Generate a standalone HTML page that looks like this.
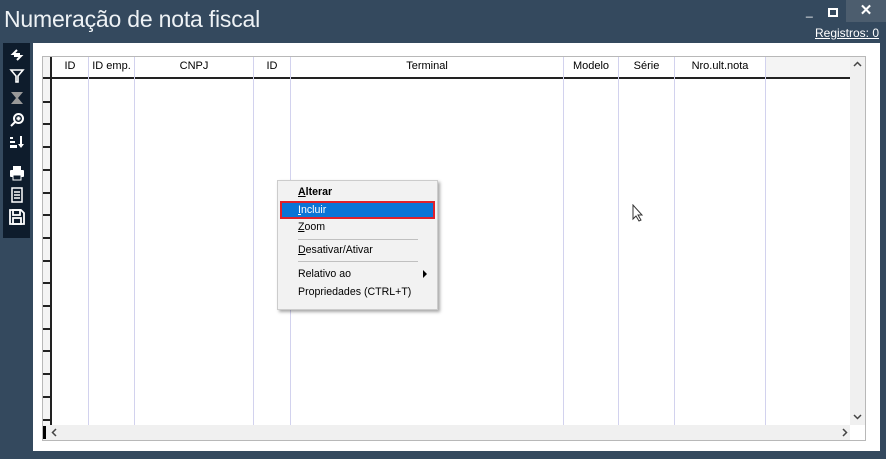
<!DOCTYPE html>
<html><head><meta charset="utf-8"><style>
*{margin:0;padding:0;box-sizing:border-box}
body{width:886px;height:459px;background:#34495e;position:relative;overflow:hidden;font-family:"Liberation Sans",sans-serif}
.abs{position:absolute}
.title{left:4px;top:6px;font-size:23px;color:#eef2f5;letter-spacing:-0.2px}
.panel{left:33px;top:43px;width:847px;height:408px;background:#fff}
.grid{left:42px;top:56px;width:824px;height:385px;border:1px solid #b8b8b8;background:#fff}
.hdr{font-size:11px;color:#000;top:60px;text-align:center}
.vl{width:1px;background:#d2d2ee;top:57px;height:368px}
.menu{left:277px;top:180px;width:161px;height:130px;background:#f2f2f2;border:1px solid #ccc;box-shadow:2px 2px 3px rgba(0,0,0,.35);font-size:10.6px}
.mi{position:absolute;left:20px}
.sep{position:absolute;left:20px;width:120px;height:1px;background:#c0c0c0}
.tb{left:3px;top:43px;width:27px;height:195px;background:#0e1c2c}
.ic{position:absolute;left:6px;width:16px;height:16px}
</style></head><body>
<div class="abs title">Numeração de nota fiscal</div>
<div class="abs" style="left:806px;top:4px;color:#fff;font-size:12px">_</div>
<div class="abs" style="left:828px;top:8px;width:10px;height:9px;border:2px solid #fff;border-top-width:2px"></div>
<div class="abs" style="left:846px;top:0;width:40px;height:22px;background:#4c5d6e;color:#fff;text-align:center;font-size:15px;line-height:22px;font-weight:bold">✕</div>
<div class="abs" style="left:815px;top:26px;color:#fff;font-size:12px;text-decoration:underline">Registros: 0</div>
<div class="abs panel"></div>
<div class="abs grid"></div>
<div class="abs" style="left:43px;top:57px;width:9px;height:368px;background:#f4f4f4;border-right:2px solid #222"></div>
<div class="abs" style="left:766px;top:57px;width:84px;height:21px;background:#f4f4f4"></div>
<div class="abs" style="left:43px;top:77px;width:807px;height:2px;background:#222"></div>
<div id="rows"></div>
<script>
var h='';for(var i=1;i<16;i++){var y=Math.round(78+i*22.7);h+='<div class="abs" style="left:43px;top:'+y+'px;width:9px;height:2px;background:#222"></div>';}
var xs=[88,134,253,290,563,618,674,765];xs.forEach(function(x){h+='<div class="abs vl" style="left:'+x+'px"></div>';});
document.getElementById('rows').innerHTML=h;
</script>
<div class="abs hdr" style="left:52px;width:36px">ID</div>
<div class="abs hdr" style="left:89px;width:45px">ID emp.</div>
<div class="abs hdr" style="left:135px;width:118px">CNPJ</div>
<div class="abs hdr" style="left:254px;width:36px">ID</div>
<div class="abs hdr" style="left:291px;width:272px">Terminal</div>
<div class="abs hdr" style="left:564px;width:54px">Modelo</div>
<div class="abs hdr" style="left:619px;width:55px">Série</div>
<div class="abs hdr" style="left:675px;width:90px">Nro.ult.nota</div>
<div class="abs" style="left:850px;top:57px;width:15px;height:368px;background:#f0f0f0"></div>
<svg class="abs" style="left:853px;top:61px" width="9" height="6" viewBox="0 0 9 6"><path d="M1 5l3.5-3.5L8 5" fill="none" stroke="#444" stroke-width="1.5"/></svg>
<svg class="abs" style="left:853px;top:414px" width="9" height="6" viewBox="0 0 9 6"><path d="M1 1l3.5 3.5L8 1" fill="none" stroke="#444" stroke-width="1.5"/></svg>
<div class="abs" style="left:43px;top:425px;width:807px;height:15px;background:#f0f0f0"></div>
<div class="abs" style="left:43px;top:426px;width:3px;height:13px;background:#000"></div>
<svg class="abs" style="left:51px;top:428px" width="6" height="9" viewBox="0 0 6 9"><path d="M5 1L1.5 4.5 5 8" fill="none" stroke="#444" stroke-width="1.5"/></svg>
<svg class="abs" style="left:842px;top:428px" width="6" height="9" viewBox="0 0 6 9"><path d="M1 1l3.5 3.5L1 8" fill="none" stroke="#444" stroke-width="1.5"/></svg>
<div class="abs tb">
<svg class="ic" style="top:4px" viewBox="0 0 16 16" fill="none" stroke="#fff" stroke-width="2"><path d="M8 3L4 7h7M8 13l4-4H5"/></svg>
<svg class="ic" style="top:25px" viewBox="0 0 16 16" fill="none" stroke="#fff" stroke-width="1.6"><path d="M2 2h12L9 8v6H7V8z"/></svg>
<svg class="ic" style="top:47px" viewBox="0 0 16 16" fill="#999"><path d="M2 2h12L9 8l5 6H2l5-6z"/></svg>
<svg class="ic" style="top:69px" viewBox="0 0 16 16" fill="none" stroke="#fff" stroke-width="2"><circle cx="9.5" cy="6.5" r="4.5"/><path d="M6 10l-4 4M9.5 4.5v4M7.5 6.5h4"/></svg>
<svg class="ic" style="top:91px" viewBox="0 0 16 16" fill="#fff"><rect x="1" y="3" width="3" height="2"/><rect x="1" y="7" width="5" height="2"/><rect x="1" y="11" width="7" height="3"/><path d="M11 2h2v8h2l-3 4-3-4h2z"/></svg>
<svg class="ic" style="top:122px" viewBox="0 0 16 16" fill="#fff"><rect x="4" y="1" width="8" height="4"/><rect x="1" y="5" width="14" height="7" rx="1"/><rect x="4" y="10" width="8" height="5" fill="#0e1c2c" stroke="#fff"/></svg>
<svg class="ic" style="top:144px" viewBox="0 0 16 16" fill="none" stroke="#fff" stroke-width="1.5"><rect x="3" y="1" width="10" height="14"/><path d="M5 5h6M5 8h6M5 11h6"/></svg>
<svg class="ic" style="top:166px" viewBox="0 0 16 16" fill="none" stroke="#fff" stroke-width="1.8"><path d="M1 1h11l3 3v11H1z"/><rect x="4" y="1" width="7" height="5"/><rect x="4" y="9" width="8" height="6"/></svg>
</div>
<div class="abs menu">
<div class="mi" style="top:5px;font-weight:bold"><u>A</u>lterar</div>
<div style="position:absolute;left:2px;top:20px;width:155px;height:18px;background:#0a74d6;border:2px solid #e0202a"></div>
<div class="mi" style="top:23px;color:#fff"><u>I</u>ncluir</div>
<div class="mi" style="top:40px"><u>Z</u>oom</div>
<div class="sep" style="top:58px"></div>
<div class="mi" style="top:63px"><u>D</u>esativar/Ativar</div>
<div class="sep" style="top:80px"></div>
<div class="mi" style="top:87px">Relativo ao</div>
<div style="position:absolute;left:145px;top:89px;width:0;height:0;border-left:4px solid #000;border-top:4px solid transparent;border-bottom:4px solid transparent"></div>
<div class="mi" style="top:105px">Propriedades (CTRL+T)</div>
</div>
<svg class="abs" style="left:632px;top:204px" width="12" height="18" viewBox="0 0 12 18"><path d="M1 1v14l3-3 3 5 2-1-3-5h4z" fill="#fff" stroke="#333"/></svg>
</body></html>
